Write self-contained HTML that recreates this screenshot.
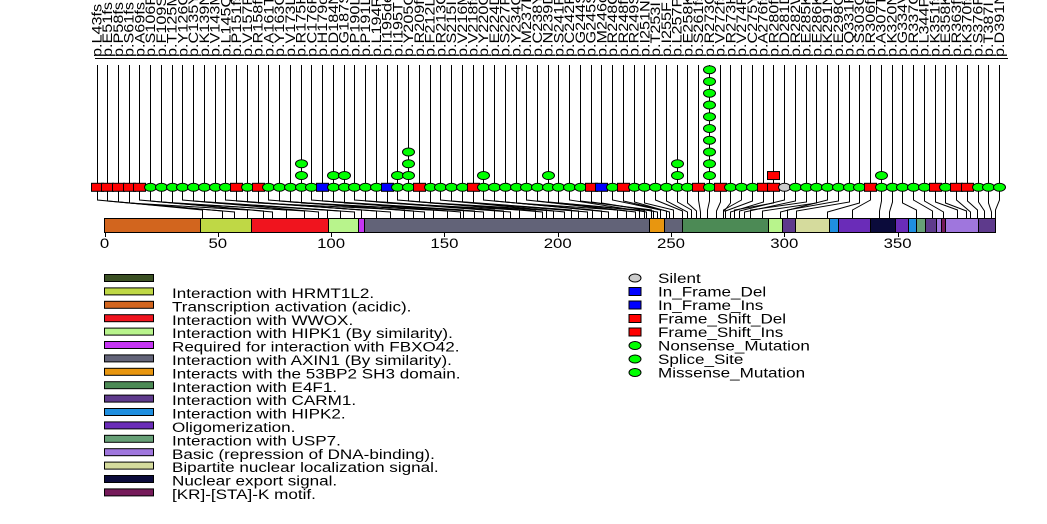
<!DOCTYPE html>
<html><head><meta charset="utf-8"><style>
html,body{margin:0;padding:0;background:#fff;width:1047px;height:524px;overflow:hidden}
svg{display:block}
text{font-family:"Liberation Sans",sans-serif;fill:#000}
.lab text{font-size:13.5px}
.lg{font-size:14px}
</style></head><body>
<svg id="s" width="1047" height="524" viewBox="0 0 1047 524" xmlns="http://www.w3.org/2000/svg">
<g id="conn" stroke="#000" stroke-width="1" fill="none"></g>
<g id="bar"></g>
<g id="dots"></g>
<line x1="95" y1="58.5" x2="1008" y2="58.5" stroke="#000"/>
<g class="lab" id="lab">
<text transform="translate(101.5,57) rotate(-90) scale(1.2,1)">p.L43fs</text>
<text transform="translate(112.2,57) rotate(-90) scale(1.2,1)">p.E51fs</text>
<text transform="translate(123,57) rotate(-90) scale(1.2,1)">p.P58fs</text>
<text transform="translate(133.7,57) rotate(-90) scale(1.2,1)">p.S61fs</text>
<text transform="translate(144.5,57) rotate(-90) scale(1.2,1)">p.A69fs</text>
<text transform="translate(155.2,57) rotate(-90) scale(1.2,1)">p.S106R</text>
<text transform="translate(165.9,57) rotate(-90) scale(1.2,1)">p.F109S</text>
<text transform="translate(176.7,57) rotate(-90) scale(1.2,1)">p.T125M</text>
<text transform="translate(187.4,57) rotate(-90) scale(1.2,1)">p.Y126C</text>
<text transform="translate(198.2,57) rotate(-90) scale(1.2,1)">p.C135Y</text>
<text transform="translate(208.9,57) rotate(-90) scale(1.2,1)">p.K139N</text>
<text transform="translate(219.7,57) rotate(-90) scale(1.2,1)">p.V143M</text>
<text transform="translate(230.4,57) rotate(-90) scale(1.2,1)">p.L145Q</text>
<text transform="translate(241.2,57) rotate(-90) scale(1.2,1)">p.P151fs</text>
<text transform="translate(251.9,57) rotate(-90) scale(1.2,1)">p.V157F</text>
<text transform="translate(262.6,57) rotate(-90) scale(1.2,1)">p.R158fs</text>
<text transform="translate(273.4,57) rotate(-90) scale(1.2,1)">p.A161T</text>
<text transform="translate(284.1,57) rotate(-90) scale(1.2,1)">p.Y163C</text>
<text transform="translate(294.9,57) rotate(-90) scale(1.2,1)">p.V173L</text>
<text transform="translate(305.6,57) rotate(-90) scale(1.2,1)">p.R175H</text>
<text transform="translate(316.4,57) rotate(-90) scale(1.2,1)">p.C176F</text>
<text transform="translate(327.1,57) rotate(-90) scale(1.2,1)">p.H179del</text>
<text transform="translate(337.8,57) rotate(-90) scale(1.2,1)">p.D184N</text>
<text transform="translate(348.6,57) rotate(-90) scale(1.2,1)">p.G187S</text>
<text transform="translate(359.3,57) rotate(-90) scale(1.2,1)">p.P190L</text>
<text transform="translate(370.1,57) rotate(-90) scale(1.2,1)">p.P191L</text>
<text transform="translate(380.8,57) rotate(-90) scale(1.2,1)">p.L194R</text>
<text transform="translate(391.6,57) rotate(-90) scale(1.2,1)">p.I195del</text>
<text transform="translate(402.3,57) rotate(-90) scale(1.2,1)">p.I195T</text>
<text transform="translate(413,57) rotate(-90) scale(1.2,1)">p.Y205C</text>
<text transform="translate(423.8,57) rotate(-90) scale(1.2,1)">p.R209fs</text>
<text transform="translate(434.5,57) rotate(-90) scale(1.2,1)">p.F212L</text>
<text transform="translate(445.3,57) rotate(-90) scale(1.2,1)">p.R213Q</text>
<text transform="translate(456,57) rotate(-90) scale(1.2,1)">p.S215I</text>
<text transform="translate(466.8,57) rotate(-90) scale(1.2,1)">p.V216M</text>
<text transform="translate(477.5,57) rotate(-90) scale(1.2,1)">p.V218fs</text>
<text transform="translate(488.2,57) rotate(-90) scale(1.2,1)">p.Y220C</text>
<text transform="translate(499,57) rotate(-90) scale(1.2,1)">p.E224D</text>
<text transform="translate(509.7,57) rotate(-90) scale(1.2,1)">p.S227F</text>
<text transform="translate(520.5,57) rotate(-90) scale(1.2,1)">p.Y234C</text>
<text transform="translate(531.2,57) rotate(-90) scale(1.2,1)">p.M237I</text>
<text transform="translate(542,57) rotate(-90) scale(1.2,1)">p.C238Y</text>
<text transform="translate(552.7,57) rotate(-90) scale(1.2,1)">p.N239D</text>
<text transform="translate(563.4,57) rotate(-90) scale(1.2,1)">p.S241F</text>
<text transform="translate(574.2,57) rotate(-90) scale(1.2,1)">p.C242F</text>
<text transform="translate(584.9,57) rotate(-90) scale(1.2,1)">p.G244S</text>
<text transform="translate(595.7,57) rotate(-90) scale(1.2,1)">p.G245S</text>
<text transform="translate(606.4,57) rotate(-90) scale(1.2,1)">p.M246del</text>
<text transform="translate(617.2,57) rotate(-90) scale(1.2,1)">p.R248Q</text>
<text transform="translate(627.9,57) rotate(-90) scale(1.2,1)">p.R248fs</text>
<text transform="translate(638.6,57) rotate(-90) scale(1.2,1)">p.R249S</text>
<text transform="translate(649.4,57) rotate(-90) scale(1.2,1)">p.I251N</text>
<text transform="translate(660.1,57) rotate(-90) scale(1.2,1)">p.T253I</text>
<text transform="translate(670.9,57) rotate(-90) scale(1.2,1)">p.I255F</text>
<text transform="translate(681.6,57) rotate(-90) scale(1.2,1)">p.L257P</text>
<text transform="translate(692.4,57) rotate(-90) scale(1.2,1)">p.E258K</text>
<text transform="translate(703.1,57) rotate(-90) scale(1.2,1)">p.S261fs</text>
<text transform="translate(713.8,57) rotate(-90) scale(1.2,1)">p.R273C</text>
<text transform="translate(724.6,57) rotate(-90) scale(1.2,1)">p.V272fs</text>
<text transform="translate(735.3,57) rotate(-90) scale(1.2,1)">p.R273H</text>
<text transform="translate(746.1,57) rotate(-90) scale(1.2,1)">p.V274F</text>
<text transform="translate(756.8,57) rotate(-90) scale(1.2,1)">p.C275Y</text>
<text transform="translate(767.6,57) rotate(-90) scale(1.2,1)">p.A276fs</text>
<text transform="translate(778.3,57) rotate(-90) scale(1.2,1)">p.R280fs</text>
<text transform="translate(789,57) rotate(-90) scale(1.2,1)">p.D281D</text>
<text transform="translate(799.8,57) rotate(-90) scale(1.2,1)">p.R282W</text>
<text transform="translate(810.5,57) rotate(-90) scale(1.2,1)">p.E285K</text>
<text transform="translate(821.3,57) rotate(-90) scale(1.2,1)">p.E286K</text>
<text transform="translate(832,57) rotate(-90) scale(1.2,1)">p.K291N</text>
<text transform="translate(842.8,57) rotate(-90) scale(1.2,1)">p.E298Q</text>
<text transform="translate(853.5,57) rotate(-90) scale(1.2,1)">p.Q331R</text>
<text transform="translate(864.2,57) rotate(-90) scale(1.2,1)">p.S303G</text>
<text transform="translate(875,57) rotate(-90) scale(1.2,1)">p.R306fs</text>
<text transform="translate(885.7,57) rotate(-90) scale(1.2,1)">p.A307T</text>
<text transform="translate(896.5,57) rotate(-90) scale(1.2,1)">p.K320N</text>
<text transform="translate(907.2,57) rotate(-90) scale(1.2,1)">p.G334V</text>
<text transform="translate(918,57) rotate(-90) scale(1.2,1)">p.R337C</text>
<text transform="translate(928.7,57) rotate(-90) scale(1.2,1)">p.L344P</text>
<text transform="translate(939.4,57) rotate(-90) scale(1.2,1)">p.K351fs</text>
<text transform="translate(950.2,57) rotate(-90) scale(1.2,1)">p.E358K</text>
<text transform="translate(960.9,57) rotate(-90) scale(1.2,1)">p.R363fs</text>
<text transform="translate(971.7,57) rotate(-90) scale(1.2,1)">p.K370fs</text>
<text transform="translate(982.4,57) rotate(-90) scale(1.2,1)">p.S376F</text>
<text transform="translate(993.2,57) rotate(-90) scale(1.2,1)">p.T387I</text>
<text transform="translate(1003.9,57) rotate(-90) scale(1.2,1)">p.D391N</text>
</g>
<g id="axis" font-size="14">
<text transform="translate(104.5,248) scale(1.2,1)" text-anchor="middle">0</text>
<text transform="translate(217.8,248) scale(1.2,1)" text-anchor="middle">50</text>
<text transform="translate(331.1,248) scale(1.2,1)" text-anchor="middle">100</text>
<text transform="translate(444.4,248) scale(1.2,1)" text-anchor="middle">150</text>
<text transform="translate(557.7,248) scale(1.2,1)" text-anchor="middle">200</text>
<text transform="translate(671,248) scale(1.2,1)" text-anchor="middle">250</text>
<text transform="translate(784.3,248) scale(1.2,1)" text-anchor="middle">300</text>
<text transform="translate(897.6,248) scale(1.2,1)" text-anchor="middle">350</text>
</g>
<g id="leg"></g>
<g class="lg" transform="translate(172,0) scale(1.22,1) translate(-172,0)">
<text x="172" y="298">Interaction with HRMT1L2.</text>
<text x="172" y="311.4">Transcription activation (acidic).</text>
<text x="172" y="324.8">Interaction with WWOX.</text>
<text x="172" y="338.2">Interaction with HIPK1 (By similarity).</text>
<text x="172" y="351.6">Required for interaction with FBXO42.</text>
<text x="172" y="365">Interaction with AXIN1 (By similarity).</text>
<text x="172" y="378.4">Interacts with the 53BP2 SH3 domain.</text>
<text x="172" y="391.8">Interaction with E4F1.</text>
<text x="172" y="405.2">Interaction with CARM1.</text>
<text x="172" y="418.6">Interaction with HIPK2.</text>
<text x="172" y="432">Oligomerization.</text>
<text x="172" y="445.4">Interaction with USP7.</text>
<text x="172" y="458.8">Basic (repression of DNA-binding).</text>
<text x="172" y="472.2">Bipartite nuclear localization signal.</text>
<text x="172" y="485.6">Nuclear export signal.</text>
<text x="172" y="499">[KR]-[STA]-K motif.</text>
</g>
<g class="lg" transform="translate(658,0) scale(1.22,1) translate(-658,0)">
<text x="658" y="283">Silent</text>
<text x="658" y="296.5">In_Frame_Del</text>
<text x="658" y="310">In_Frame_Ins</text>
<text x="658" y="323.5">Frame_Shift_Del</text>
<text x="658" y="337">Frame_Shift_Ins</text>
<text x="658" y="350.5">Nonsense_Mutation</text>
<text x="658" y="364">Splice_Site</text>
<text x="658" y="377.5">Missense_Mutation</text>
</g>
<g stroke="#000" stroke-width="1">
<ellipse cx="635" cy="278" rx="6" ry="4" fill="#CCCCCC"/>
<rect x="629" y="287.5" width="12" height="8" fill="#0000FF"/>
<rect x="629" y="301" width="12" height="8" fill="#0000FF"/>
<rect x="629" y="314.5" width="12" height="8" fill="#FF0000"/>
<rect x="629" y="328" width="12" height="8" fill="#FF0000"/>
<ellipse cx="635" cy="345.5" rx="6" ry="4" fill="#00FF00"/>
<ellipse cx="635" cy="359" rx="6" ry="4" fill="#00FF00"/>
<ellipse cx="635" cy="372.5" rx="6" ry="4" fill="#00FF00"/>
</g>
</svg>
<script>
var NS="http://www.w3.org/2000/svg";
function el(p,t,a){var e=document.createElementNS(NS,t);for(var k in a)e.setAttribute(k,a[k]);p.appendChild(e);return e;}
var aa=[43,52,57,63,70,74,80,88,94,98,104,110,113,120,126,132,136,141,145,151,157,158,163,167,172,176,179,183,190,193,195,198,203,206,209,213,215,219,222,226,230,234,236,238,239,241,242,244,245,248,249,251,255,257,259,261,263,266,270,273,273,274,276,278,280,282,285,290,298,301,305,319,330,342,346,358,365,370,376,380,382,385,388,391,393];
function ax(a){return 104.5+a*2.266;}
function cx(i){return 96.5+i*10.744;}
var red=[1,2,3,4,5,14,16,31,36,47,50,57,59,63,64,73,79,81,82],blue=[22,28,48],grey=[65];
var stack={20:3,23:2,24:2,29:2,30:4,37:2,43:2,55:3,58:11,64:2,74:2};
var conn=document.getElementById('conn'),dots=document.getElementById('dots'),bar=document.getElementById('bar');
var doms=[[104,200,'#D2651E'],[200,251,'#BFD845'],[251,328,'#F0141E'],[328,358,'#B8F48C'],[358,364,'#C535F2'],[364,649,'#626378'],[649,664,'#E8960F'],[664,682,'#626378'],[682,768,'#4C8A55'],[768,782,'#B8F48C'],[782,795,'#5E3A8C'],[795,829,'#D5DB9D'],[829,838,'#1F8FE0'],[838,870,'#6A2CB8'],[870,895,'#0B0B3B'],[895,908,'#6A2CB8'],[908,916,'#1F8FE0'],[916,925,'#67A077'],[925,936,'#5E3A8C'],[936,941,'#9F76DD'],[941,945,'#751A5A'],[945,978,'#9F76DD'],[978,995,'#5E3A8C']];
doms.forEach(function(d){el(bar,'rect',{x:d[0]+.5,y:218.5,width:d[1]-d[0],height:14,fill:d[2],stroke:'#000'});});
for(var i=0;i<85;i++){
 var x=Math.round(cx(i))+.5,a=Math.round(ax(aa[i]))+.5,n=i+1;
 el(conn,'path',{d:'M'+x+' 65V'+(200+ (i%4))+'L'+a+' '+(210+(i%3))+'V232'});
 var k=stack[n]||1;
 for(var j=0;j<k;j++){
  var y=187.3-j*11.76;
  var isRed=red.indexOf(n)>=0&&(j==0||n==64);
  var isBlue=blue.indexOf(n)>=0&&j==0;
  if(isRed||isBlue) el(dots,'rect',{x:x-6,y:y-4,width:12,height:8,fill:isRed?'#FF0000':'#0000FF',stroke:'#000'});
  else el(dots,'ellipse',{cx:x,cy:y,rx:6,ry:4,fill:grey.indexOf(n)>=0?'#CCCCCC':'#00FF00',stroke:'#000'});
 }
}
[0,50,100,150,200,250,300,350].forEach(function(t){var x=Math.round(ax(t))+.5;el(bar,'line',{x1:x,y1:232,x2:x,y2:237,stroke:'#000'});});
var lc=['#3B5023','#BFD845','#D2651E','#F0141E','#B8F48C','#C535F2','#626378','#E8960F','#4C8A55','#5E3A8C','#1F8FE0','#6A2CB8','#67A077','#9F76DD','#D5DB9D','#0B0B3B','#751A5A'];
var lg=document.getElementById('leg');
lc.forEach(function(c,i){el(lg,'rect',{x:104.5,y:(274.5+i*13.4).toFixed(1),width:49,height:7,fill:c,stroke:'#000'});});
</script>
</body></html>
